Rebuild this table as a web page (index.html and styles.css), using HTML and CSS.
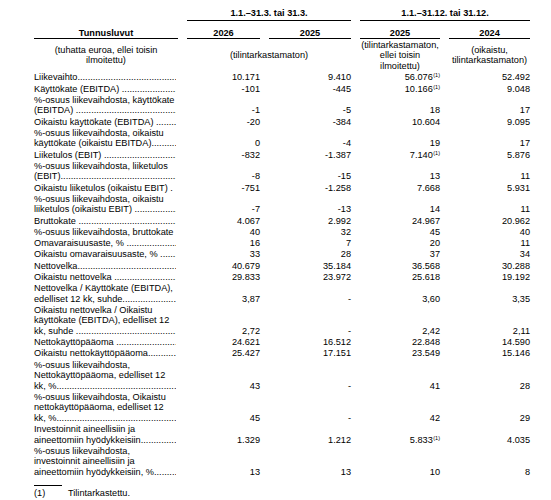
FILE: index.html
```html
<!DOCTYPE html>
<html lang="fi">
<head>
    <meta charset="UTF-8">
    <title>Tunnusluvut</title>
    <link rel="stylesheet" href="styles.css">
</head>
<body>
    <table class="luvut">
        <colgroup>
            <col class="c-lbl"><col class="c-q1"><col class="c-q2"><col class="c-y1"><col class="c-y2">
        </colgroup>
        <thead>
            <tr class="kausi">
                <th></th>
                <th colspan="2">1.1.–31.3. tai 31.3.</th>
                <th colspan="2">1.1.–31.12. tai 31.12.</th>
            </tr>
            <tr class="vuosi">
                <th>Tunnusluvut</th>
                <th>2026</th>
                <th>2025</th>
                <th>2025</th>
                <th>2024</th>
            </tr>
            <tr class="selite">
                <td>(tuhatta euroa, ellei toisin<br>ilmoitettu)</td>
                <td colspan="2">(tilintarkastamaton)</td>
                <td>(tilintarkastamaton,<br>ellei toisin<br>ilmoitettu)</td>
                <td>(oikaistu,<br>tilintarkastamaton)</td>
            </tr>
        </thead>
        <tbody>
            <tr><td><span class="lead">Liikevaihto</span></td><td>10.171</td><td>9.410</td><td>56.076<sup>(1)</sup></td><td>52.492</td></tr>
            <tr><td><span class="lead sp">Käyttökate (EBITDA)</span></td><td>-101</td><td>-445</td><td>10.166<sup>(1)</sup></td><td>9.048</td></tr>
            <tr><td>%-osuus liikevaihdosta, käyttökate<br><span class="lead sp">(EBITDA)</span></td><td>-1</td><td>-5</td><td>18</td><td>17</td></tr>
            <tr><td><span class="lead sp">Oikaistu käyttökate (EBITDA)</span></td><td>-20</td><td>-384</td><td>10.604</td><td>9.095</td></tr>
            <tr><td>%-osuus liikevaihdosta, oikaistu<br><span class="lead">käyttökate (oikaistu EBITDA)</span></td><td>0</td><td>-4</td><td>19</td><td>17</td></tr>
            <tr><td><span class="lead sp">Liiketulos (EBIT)</span></td><td>-832</td><td>-1.387</td><td>7.140<sup>(1)</sup></td><td>5.876</td></tr>
            <tr><td>%-osuus liikevaihdosta, liiketulos<br><span class="lead">(EBIT)</span></td><td>-8</td><td>-15</td><td>13</td><td>11</td></tr>
            <tr><td>Oikaistu liiketulos (oikaistu EBIT) <span class="piste">.</span></td><td>-751</td><td>-1.258</td><td>7.668</td><td>5.931</td></tr>
            <tr><td>%-osuus liikevaihdosta, oikaistu<br><span class="lead sp">liiketulos (oikaistu EBIT)</span></td><td>-7</td><td>-13</td><td>14</td><td>11</td></tr>
            <tr><td><span class="lead sp">Bruttokate</span></td><td>4.067</td><td>2.992</td><td>24.967</td><td>20.962</td></tr>
            <tr><td>%-osuus liikevaihdosta, bruttokate</td><td>40</td><td>32</td><td>45</td><td>40</td></tr>
            <tr><td><span class="lead sp">Omavaraisuusaste, %</span></td><td>16</td><td>7</td><td>20</td><td>11</td></tr>
            <tr><td><span class="lead sp">Oikaistu omavaraisuusaste, %</span></td><td>33</td><td>28</td><td>37</td><td>34</td></tr>
            <tr><td><span class="lead">Nettovelka</span></td><td>40.679</td><td>35.184</td><td>36.568</td><td>30.288</td></tr>
            <tr><td><span class="lead sp">Oikaistu nettovelka</span></td><td>29.833</td><td>23.972</td><td>25.618</td><td>19.192</td></tr>
            <tr><td>Nettovelka / Käyttökate (EBITDA),<br><span class="lead">edelliset 12 kk, suhde</span></td><td>3,87</td><td>-</td><td>3,60</td><td>3,35</td></tr>
            <tr><td>Oikaistu nettovelka / Oikaistu<br>käyttökate (EBITDA), edelliset 12<br><span class="lead sp">kk, suhde</span></td><td>2,72</td><td>-</td><td>2,42</td><td>2,11</td></tr>
            <tr><td><span class="lead sp">Nettokäyttöpääoma</span></td><td>24.621</td><td>16.512</td><td>22.848</td><td>14.590</td></tr>
            <tr><td><span class="lead">Oikaistu nettokäyttöpääoma</span></td><td>25.427</td><td>17.151</td><td>23.549</td><td>15.146</td></tr>
            <tr><td>%-osuus liikevaihdosta,<br>Nettokäyttöpääoma, edelliset 12<br><span class="lead">kk, %</span></td><td>43</td><td>-</td><td>41</td><td>28</td></tr>
            <tr><td>%-osuus liikevaihdosta, Oikaistu<br>nettokäyttöpääoma, edelliset 12<br><span class="lead">kk, %</span></td><td>45</td><td>-</td><td>42</td><td>29</td></tr>
            <tr><td>Investoinnit aineellisiin ja<br><span class="lead">aineettomiin hyödykkeisiin</span></td><td>1.329</td><td>1.212</td><td>5.833<sup>(1)</sup></td><td>4.035</td></tr>
            <tr><td>%-osuus liikevaihdosta,<br>investoinnit aineellisiin ja<br><span class="lead">aineettomiin hyödykkeisiin, %</span></td><td>13</td><td>13</td><td>10</td><td>8</td></tr>
        </tbody>
    </table>

    <div class="alaviite">
        <span class="nro">(1)</span>
        <span>Tilintarkastettu.</span>
    </div>
</body>
</html>
```

FILE: styles.css
```css
* {
    margin: 0;
    padding: 0;
    box-sizing: border-box;
}
body {
    font-family: "Liberation Sans", Arial, sans-serif;
    font-size: 9.2px;
    line-height: 10.5px;
    color: #000;
    background: #fff;
    padding: 8px 0 0 25px;
}

.luvut {
    table-layout: fixed;
    border-collapse: separate;
    border-spacing: 9px 0;
    width: 513px;
}
.c-lbl { width: 144px; }
.c-q1 { width: 73px; }
.c-q2 { width: 82px; }
.c-y1 { width: 80px; }
.c-y2 { width: 81px; }

.luvut th {
    font-weight: bold;
    text-align: center;
}

/* kauden otsikot, viiva koko ryhmän levyltä */
.kausi th {
    padding-bottom: 1px;
}
.kausi th + th {
    border-bottom: 1px solid #000;
}
.vuosi th {
    padding-top: 7px;
    border-bottom: 1px solid #000;
}

.selite td {
    text-align: center;
    vertical-align: middle;
    padding: 0.5px 0 0.5px;
}

.luvut tbody td {
    text-align: right;
    vertical-align: bottom;
    padding-top: 0.75px;
    white-space: nowrap;
}
.luvut tbody td:first-child {
    text-align: left;
    white-space: normal;
    padding-right: 2px;
}

/* pisteviiva rivin loppuun */
.lead {
    display: flex;
}
.lead::after {
    content: "..............................................................................................";
    flex: 1;
    overflow: hidden;
    white-space: nowrap;
}
.lead.sp::after {
    padding-left: 2.5px;
}

sup {
    font-size: 5.5px;
    line-height: 0;
    vertical-align: 3px;
    margin-left: 0.5px;
}

.alaviite {
    margin: 8px 0 0 9px;
    padding-top: 3px;
    display: flex;
    position: relative;
}
.alaviite::before {
    content: "";
    position: absolute;
    left: 0;
    top: 0;
    width: 28px;
    border-top: 1px solid #000;
}
.alaviite .nro {
    width: 34px;
}
```
